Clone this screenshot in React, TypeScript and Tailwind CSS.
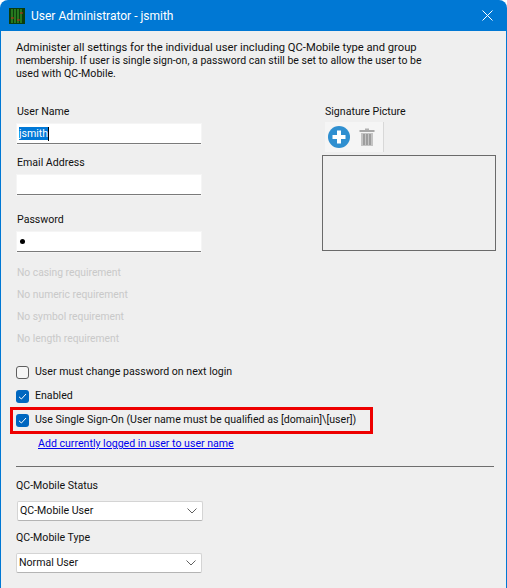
import React from 'react';

const Label: React.FC<{ children: React.ReactNode; className?: string }> = ({ children, className }) => (
  <div className={`h-[17px] leading-[17px] text-[#111] ${className ?? ''}`}>{children}</div>
);

const TextBox: React.FC<{ children?: React.ReactNode; className?: string }> = ({ children, className }) => (
  <div className={`flex h-[20px] w-[184px] items-center border-b border-b-[#7a7a7a] bg-white pl-[2px] shadow-[0_0_0_1px_#f5f5f5] ${className ?? ''}`}>
    {children}
  </div>
);

const Check: React.FC<{ checked?: boolean }> = ({ checked }) =>
  checked ? (
    <span className="flex h-[13px] w-[13px] items-center justify-center rounded-[3px] bg-[#0067c0]">
      <svg width="9" height="9" viewBox="0 0 9 9" fill="none" stroke="#fff" strokeWidth="1">
        <path d="M1 4.8 L3.4 7 L8 2" />
      </svg>
    </span>
  ) : (
    <span className="h-[13px] w-[13px] rounded-[3px] border border-[#5f5f5f] bg-[#f6f6f6]" />
  );

const CheckRow: React.FC<{ checked?: boolean; children: React.ReactNode; className?: string }> = ({ checked, children, className }) => (
  <div className={`flex h-[24px] items-center gap-[6px] pl-[15px] text-[#111] ${className ?? ''}`}>
    <Check checked={checked} />
    <span>{children}</span>
  </div>
);

const Select: React.FC<{ value: string; className?: string }> = ({ value, className }) => (
  <div className={`flex h-[20px] w-[186px] items-center justify-between rounded-[2px] border border-[#d4d4d4] border-b-[#b4b4b4] bg-white pl-[2px] pr-[5px] text-[#111] ${className ?? ''}`}>
    <span>{value}</span>
    <svg width="10" height="6" viewBox="0 0 10 6" fill="none" stroke="#606060" strokeWidth="1">
      <path d="M0.5 0.5 L5 5 L9.5 0.5" />
    </svg>
  </div>
);

const Requirement: React.FC<{ children: React.ReactNode }> = ({ children }) => (
  <div className="h-[22px] leading-[22px] text-[10.3px] text-[#c9c9c9]">{children}</div>
);

export default function App() {
  return (
    <div className="h-[588px] w-[507px] overflow-hidden rounded-t-[8px] bg-[#0078d4] font-['Roboto','Open_Sans',sans-serif] text-[10.6px]">
      {/* Title bar */}
      <div className="flex h-[31px] items-center pl-[9px] pr-[14px] text-white">
        <svg width="16" height="16" viewBox="0 0 16 16" className="mr-[6px]">
          <rect width="16" height="16" fill="#0c3d0c" />
          <path d="M3 1V15M6 1V15M9 1V15M12 1V15" stroke="#39a02c" strokeWidth="1.2" />
          <path d="M2 10H5M8 12H11M11 5H14" stroke="#c8241c" strokeWidth="1" />
        </svg>
        <span className="flex-1 text-[12px]">User Administrator - jsmith</span>
        <svg width="11" height="11" viewBox="0 0 11 11" stroke="#fff" strokeWidth="1">
          <path d="M0.5 0.5 L10.5 10.5 M10.5 0.5 L0.5 10.5" />
        </svg>
      </div>

      {/* Body */}
      <div className="mx-[1px] h-[557px] bg-[#efefef]">
        <div className="pl-[15px] pt-[10px] leading-[13px] text-[#111]">
          <div className="text-[11.2px]">Administer all settings for the individual user including QC-Mobile type and group</div>
          <div className="text-[10.5px]">membership. If user is single sign-on, a password can still be set to allow the user to be</div>
          <div>used with QC-Mobile.</div>
        </div>

        <div className="mt-[23px] flex">
          <div className="w-[305px] pl-[16px]">
            <Label>User Name</Label>
            <TextBox className="mt-[4px]">
              <span className="bg-[#0078d7] leading-[13px] text-white">jsmith</span>
              <span className="h-[14px] w-[1px] bg-black" />
            </TextBox>
            <Label className="mt-[10px]">Email Address</Label>
            <TextBox className="mt-[4px]" />
            <Label className="mt-[16px]">Password</Label>
            <TextBox className="mt-[4px]">
              <span className="ml-[1px] h-[5px] w-[5px] rounded-full bg-black" />
            </TextBox>
            <div className="mt-[10px]">
              <Requirement>No casing requirement</Requirement>
              <Requirement>No numeric requirement</Requirement>
              <Requirement>No symbol requirement</Requirement>
              <Requirement>No length requirement</Requirement>
            </div>
          </div>

          <div>
            <Label className="ml-[19px]">Signature Picture</Label>
            <div className="ml-[19px] mt-[2px] flex h-[30px] w-[59px] items-center gap-[9px] border-r border-r-[#d8d8d8] bg-[#f5f5f5] pl-[3px]">
              <svg width="22" height="22" viewBox="0 0 22 22">
                <circle cx="11" cy="11" r="11" fill="#2f8fd0" />
                <path d="M11 4.5V17.5M4.5 11H17.5" stroke="#fff" strokeWidth="4" />
              </svg>
              <svg width="16" height="20" viewBox="0 0 16 20" fill="none">
                <path d="M6 1.5H10V3H6Z" fill="#b0b0b0" />
                <rect x="0.5" y="3" width="15" height="2" fill="#a8a8a8" />
                <path d="M2 6H14V19H2Z" fill="#c4c4c4" />
                <path d="M5 7V18M8 7V18M11 7V18" stroke="#8e8e8e" strokeWidth="1.4" />
              </svg>
            </div>
            <div className="ml-[16px] mt-[3px] h-[96px] w-[174px] border border-[#6a6a6a]" />
          </div>
        </div>

        <div className="mt-[10px]">
          <CheckRow>User must change password on next login</CheckRow>
          <CheckRow checked>Enabled</CheckRow>
          <div className="relative">
            <CheckRow checked>Use Single Sign-On (User name must be qualified as [domain]\[user])</CheckRow>
            <div className="absolute left-[9px] top-[-1px] h-[27px] w-[363px] border-[3px] border-[#ee0000]" />
          </div>
          <div className="h-[24px] pl-[37px] leading-[24px] text-[#0000ee] underline">
            Add currently logged in user to user name
          </div>
        </div>

        <div className="ml-[15px] mt-[10px] h-[1px] w-[478px] bg-[#6e6e6e]" />

        <div className="pl-[15px]">
          <Label className="mt-[10px]">QC-Mobile Status</Label>
          <Select value="QC-Mobile User" className="ml-[1px] mt-[7px]" />
          <Label className="mt-[8px]">QC-Mobile Type</Label>
          <Select value="Normal User" className="mt-[7px]" />
        </div>
      </div>
    </div>
  );
}
